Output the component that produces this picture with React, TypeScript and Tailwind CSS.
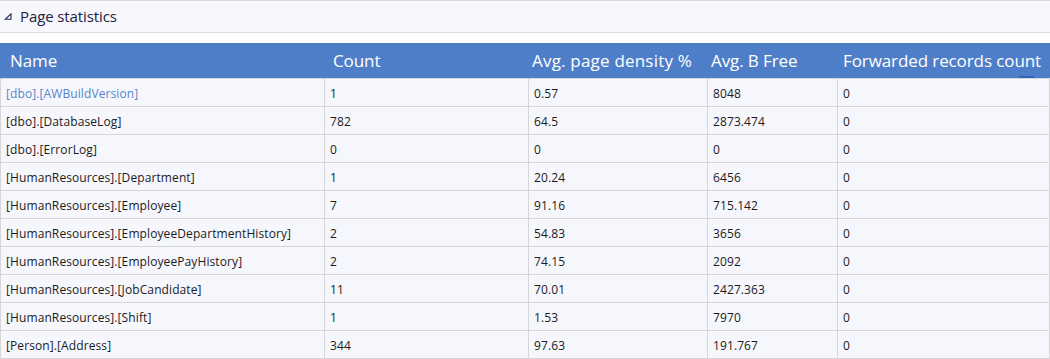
const rows: [string, string, string, string, string][] = [
  ["[dbo].[AWBuildVersion]", "1", "0.57", "8048", "0"],
  ["[dbo].[DatabaseLog]", "782", "64.5", "2873.474", "0"],
  ["[dbo].[ErrorLog]", "0", "0", "0", "0"],
  ["[HumanResources].[Department]", "1", "20.24", "6456", "0"],
  ["[HumanResources].[Employee]", "7", "91.16", "715.142", "0"],
  ["[HumanResources].[EmployeeDepartmentHistory]", "2", "54.83", "3656", "0"],
  ["[HumanResources].[EmployeePayHistory]", "2", "74.15", "2092", "0"],
  ["[HumanResources].[JobCandidate]", "11", "70.01", "2427.363", "0"],
  ["[HumanResources].[Shift]", "1", "1.53", "7970", "0"],
  ["[Person].[Address]", "344", "97.63", "191.767", "0"],
];

function Caret() {
  return (
    <svg width="8" height="7" viewBox="0 0 8 7" className="mr-[8px]">
      <path d="M7 0.8 L7 6.3 L1.2 6.3 Z" fill="none" stroke="#1f2d4f" strokeWidth="1.1" strokeLinejoin="miter" />
    </svg>
  );
}

export default function App() {
  return (
    <div className="w-[1050px] h-[359px] overflow-hidden bg-white font-['Open_Sans',sans-serif]">
      <div className="h-[33px] border-y border-[#d9d9de] bg-[#f7f7fc] flex items-center pl-[4px]">
        <Caret />
        <span className="text-[15px] text-[#1a2340] tracking-[-0.1px]">Page statistics</span>
      </div>

      <div className="mt-[10px]">
        <div className="relative h-[35px] bg-[#4f7ec9] flex items-center text-white text-[17px] tracking-[-0.1px]">
          <div className="w-[333px] pl-[10px]">Name</div>
          <div className="w-[199px]">Count</div>
          <div className="w-[179px] whitespace-nowrap tracking-[0.2px]">Avg. page density %</div>
          <div className="w-[132px]">Avg. B Free</div>
          <div className="flex-1 whitespace-nowrap">Forwarded records count</div>
          <div className="absolute left-[1019px] bottom-0 w-[15px] h-[2px] bg-[#2f63bd]" />
        </div>

        <div className="border-t border-[#d6d6d6]">
          {rows.map((r, i) => (
            <div key={i} className="flex h-[28px] border-b border-l border-[#d6d6d6] bg-[#f6f7fd] text-[12px] tracking-[0.1px] text-[#1b1b1b]">
              <div className={`w-[324px] px-[5px] pt-[2px] flex items-center border-r border-[#d6d6d6] ${i === 0 ? "text-[#5585c8]" : ""}`}>{r[0]}</div>
              <div className="w-[204px] px-[5px] pt-[2px] flex items-center border-r border-[#d6d6d6]">{r[1]}</div>
              <div className="w-[179px] px-[5px] pt-[2px] flex items-center border-r border-[#d6d6d6]">{r[2]}</div>
              <div className="w-[130px] px-[5px] pt-[2px] flex items-center border-r border-[#d6d6d6]">{r[3]}</div>
              <div className="w-[212px] px-[5px] pt-[2px] flex items-center border-r border-[#d6d6d6]">{r[4]}</div>
            </div>
          ))}
        </div>
      </div>
    </div>
  );
}
